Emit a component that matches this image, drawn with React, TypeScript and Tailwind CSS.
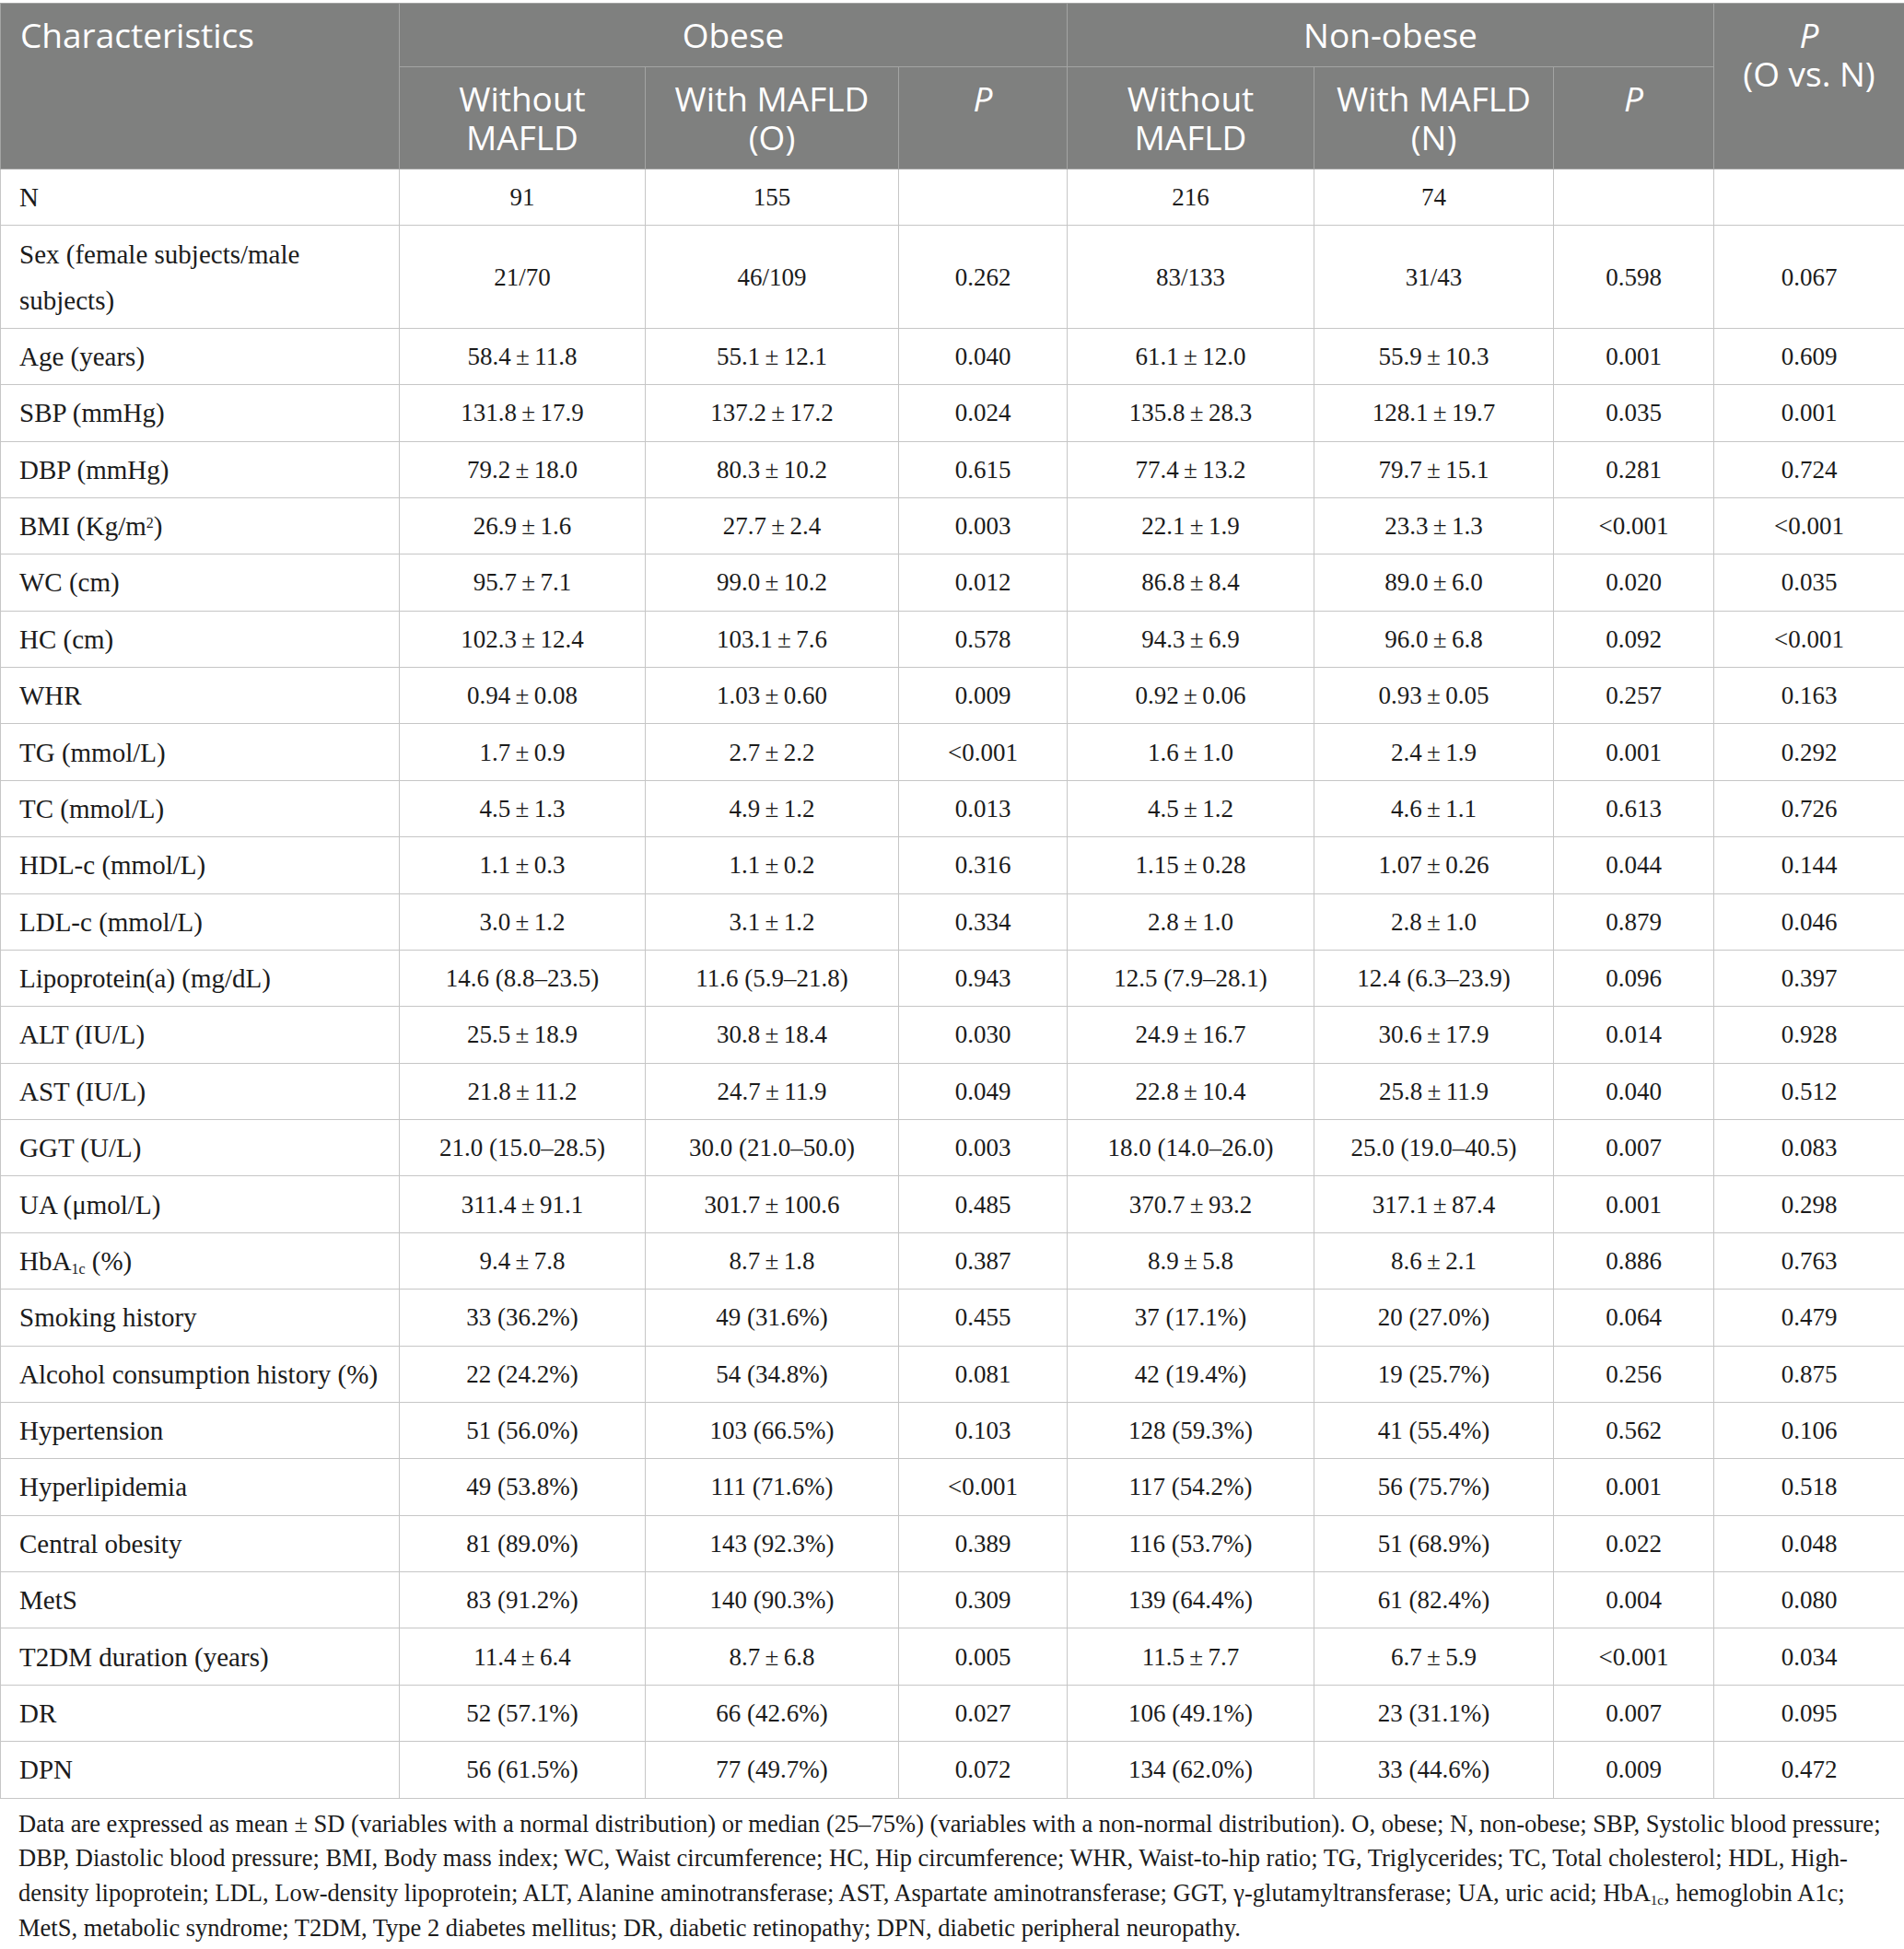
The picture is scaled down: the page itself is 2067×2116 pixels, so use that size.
import React from 'react';

type Row = { label: React.ReactNode; cells: string[] };

const pm = (a: string, b: string) => `${a}\u2009±\u2009${b}`;

const rows: Row[] = [
  { label: 'N', cells: ['91', '155', '', '216', '74', '', ''] },
  { label: 'Sex (female subjects/male subjects)', cells: ['21/70', '46/109', '0.262', '83/133', '31/43', '0.598', '0.067'] },
  { label: 'Age (years)', cells: [pm('58.4', '11.8'), pm('55.1', '12.1'), '0.040', pm('61.1', '12.0'), pm('55.9', '10.3'), '0.001', '0.609'] },
  { label: 'SBP (mmHg)', cells: [pm('131.8', '17.9'), pm('137.2', '17.2'), '0.024', pm('135.8', '28.3'), pm('128.1', '19.7'), '0.035', '0.001'] },
  { label: 'DBP (mmHg)', cells: [pm('79.2', '18.0'), pm('80.3', '10.2'), '0.615', pm('77.4', '13.2'), pm('79.7', '15.1'), '0.281', '0.724'] },
  {
    label: (
      <>
        BMI (Kg/m<sup className="text-[16px]">2</sup>)
      </>
    ),
    cells: [pm('26.9', '1.6'), pm('27.7', '2.4'), '0.003', pm('22.1', '1.9'), pm('23.3', '1.3'), '<0.001', '<0.001'],
  },
  { label: 'WC (cm)', cells: [pm('95.7', '7.1'), pm('99.0', '10.2'), '0.012', pm('86.8', '8.4'), pm('89.0', '6.0'), '0.020', '0.035'] },
  { label: 'HC (cm)', cells: [pm('102.3', '12.4'), pm('103.1', '7.6'), '0.578', pm('94.3', '6.9'), pm('96.0', '6.8'), '0.092', '<0.001'] },
  { label: 'WHR', cells: [pm('0.94', '0.08'), pm('1.03', '0.60'), '0.009', pm('0.92', '0.06'), pm('0.93', '0.05'), '0.257', '0.163'] },
  { label: 'TG (mmol/L)', cells: [pm('1.7', '0.9'), pm('2.7', '2.2'), '<0.001', pm('1.6', '1.0'), pm('2.4', '1.9'), '0.001', '0.292'] },
  { label: 'TC (mmol/L)', cells: [pm('4.5', '1.3'), pm('4.9', '1.2'), '0.013', pm('4.5', '1.2'), pm('4.6', '1.1'), '0.613', '0.726'] },
  { label: 'HDL-c (mmol/L)', cells: [pm('1.1', '0.3'), pm('1.1', '0.2'), '0.316', pm('1.15', '0.28'), pm('1.07', '0.26'), '0.044', '0.144'] },
  { label: 'LDL-c (mmol/L)', cells: [pm('3.0', '1.2'), pm('3.1', '1.2'), '0.334', pm('2.8', '1.0'), pm('2.8', '1.0'), '0.879', '0.046'] },
  { label: 'Lipoprotein(a) (mg/dL)', cells: ['14.6 (8.8–23.5)', '11.6 (5.9–21.8)', '0.943', '12.5 (7.9–28.1)', '12.4 (6.3–23.9)', '0.096', '0.397'] },
  { label: 'ALT (IU/L)', cells: [pm('25.5', '18.9'), pm('30.8', '18.4'), '0.030', pm('24.9', '16.7'), pm('30.6', '17.9'), '0.014', '0.928'] },
  { label: 'AST (IU/L)', cells: [pm('21.8', '11.2'), pm('24.7', '11.9'), '0.049', pm('22.8', '10.4'), pm('25.8', '11.9'), '0.040', '0.512'] },
  { label: 'GGT (U/L)', cells: ['21.0 (15.0–28.5)', '30.0 (21.0–50.0)', '0.003', '18.0 (14.0–26.0)', '25.0 (19.0–40.5)', '0.007', '0.083'] },
  { label: 'UA (μmol/L)', cells: [pm('311.4', '91.1'), pm('301.7', '100.6'), '0.485', pm('370.7', '93.2'), pm('317.1', '87.4'), '0.001', '0.298'] },
  {
    label: (
      <>
        HbA<sub className="text-[16px]">1c</sub> (%)
      </>
    ),
    cells: [pm('9.4', '7.8'), pm('8.7', '1.8'), '0.387', pm('8.9', '5.8'), pm('8.6', '2.1'), '0.886', '0.763'],
  },
  { label: 'Smoking history', cells: ['33 (36.2%)', '49 (31.6%)', '0.455', '37 (17.1%)', '20 (27.0%)', '0.064', '0.479'] },
  { label: 'Alcohol consumption history (%)', cells: ['22 (24.2%)', '54 (34.8%)', '0.081', '42 (19.4%)', '19 (25.7%)', '0.256', '0.875'] },
  { label: 'Hypertension', cells: ['51 (56.0%)', '103 (66.5%)', '0.103', '128 (59.3%)', '41 (55.4%)', '0.562', '0.106'] },
  { label: 'Hyperlipidemia', cells: ['49 (53.8%)', '111 (71.6%)', '<0.001', '117 (54.2%)', '56 (75.7%)', '0.001', '0.518'] },
  { label: 'Central obesity', cells: ['81 (89.0%)', '143 (92.3%)', '0.389', '116 (53.7%)', '51 (68.9%)', '0.022', '0.048'] },
  { label: 'MetS', cells: ['83 (91.2%)', '140 (90.3%)', '0.309', '139 (64.4%)', '61 (82.4%)', '0.004', '0.080'] },
  { label: 'T2DM duration (years)', cells: [pm('11.4', '6.4'), pm('8.7', '6.8'), '0.005', pm('11.5', '7.7'), pm('6.7', '5.9'), '<0.001', '0.034'] },
  { label: 'DR', cells: ['52 (57.1%)', '66 (42.6%)', '0.027', '106 (49.1%)', '23 (31.1%)', '0.007', '0.095'] },
  { label: 'DPN', cells: ['56 (61.5%)', '77 (49.7%)', '0.072', '134 (62.0%)', '33 (44.6%)', '0.009', '0.472'] },
];

const th = 'border border-[#a3a4a3] bg-[#7f807f] text-white font-normal text-[37px] leading-[42px] py-[13px] align-top';
const td = 'border border-[#c6c6c6] py-[5.2px] leading-[50px] text-center text-[27px]';

export default function App() {
  return (
    <div className="w-[2067px] bg-white pt-[3px] text-[#1b1b1b] font-['Liberation_Serif',serif]">
      <table className="w-[2067px] table-fixed border-collapse">
        <colgroup>
          <col className="w-[433px]" />
          <col className="w-[267px]" />
          <col className="w-[275px]" />
          <col className="w-[183px]" />
          <col className="w-[268px]" />
          <col className="w-[260px]" />
          <col className="w-[174px]" />
          <col className="w-[207px]" />
        </colgroup>
        <thead className="font-['Open_Sans',sans-serif]">
          <tr>
            <th rowSpan={2} className={`${th} text-left pl-[21px]`}>Characteristics</th>
            <th colSpan={3} className={`${th} text-center`}>Obese</th>
            <th colSpan={3} className={`${th} text-center`}>Non-obese</th>
            <th rowSpan={2} className={`${th} text-center`}>
              <i>P</i>
              <br />
              (O vs. N)
            </th>
          </tr>
          <tr>
            <th className={`${th} text-center`}>Without<br />MAFLD</th>
            <th className={`${th} text-center`}>With MAFLD<br />(O)</th>
            <th className={`${th} text-center`}><i>P</i></th>
            <th className={`${th} text-center`}>Without<br />MAFLD</th>
            <th className={`${th} text-center`}>With MAFLD<br />(N)</th>
            <th className={`${th} text-center`}><i>P</i></th>
          </tr>
        </thead>
        <tbody>
          {rows.map((r, i) => (
            <tr key={i}>
              <td className="border border-[#c6c6c6] py-[5.2px] leading-[50px] pl-[20px] pr-[14px] text-left text-[29px]">{r.label}</td>
              {r.cells.map((c, j) => (
                <td key={j} className={td}>{c}</td>
              ))}
            </tr>
          ))}
        </tbody>
      </table>
      <div className="mt-[9px] pl-[20px] text-[26.5px] leading-[37.8px]">
        <div className="whitespace-nowrap">Data are expressed as mean ± SD (variables with a normal distribution) or median (25–75%) (variables with a non-normal distribution). O, obese; N, non-obese; SBP, Systolic blood pressure;</div>
        <div className="whitespace-nowrap">DBP, Diastolic blood pressure; BMI, Body mass index; WC, Waist circumference; HC, Hip circumference; WHR, Waist-to-hip ratio; TG, Triglycerides; TC, Total cholesterol; HDL, High-</div>
        <div className="whitespace-nowrap">density lipoprotein; LDL, Low-density lipoprotein; ALT, Alanine aminotransferase; AST, Aspartate aminotransferase; GGT, γ-glutamyltransferase; UA, uric acid; HbA<sub className="text-[15px]">1c</sub>, hemoglobin A1c;</div>
        <div className="whitespace-nowrap">MetS, metabolic syndrome; T2DM, Type 2 diabetes mellitus; DR, diabetic retinopathy; DPN, diabetic peripheral neuropathy.</div>
      </div>
    </div>
  );
}
